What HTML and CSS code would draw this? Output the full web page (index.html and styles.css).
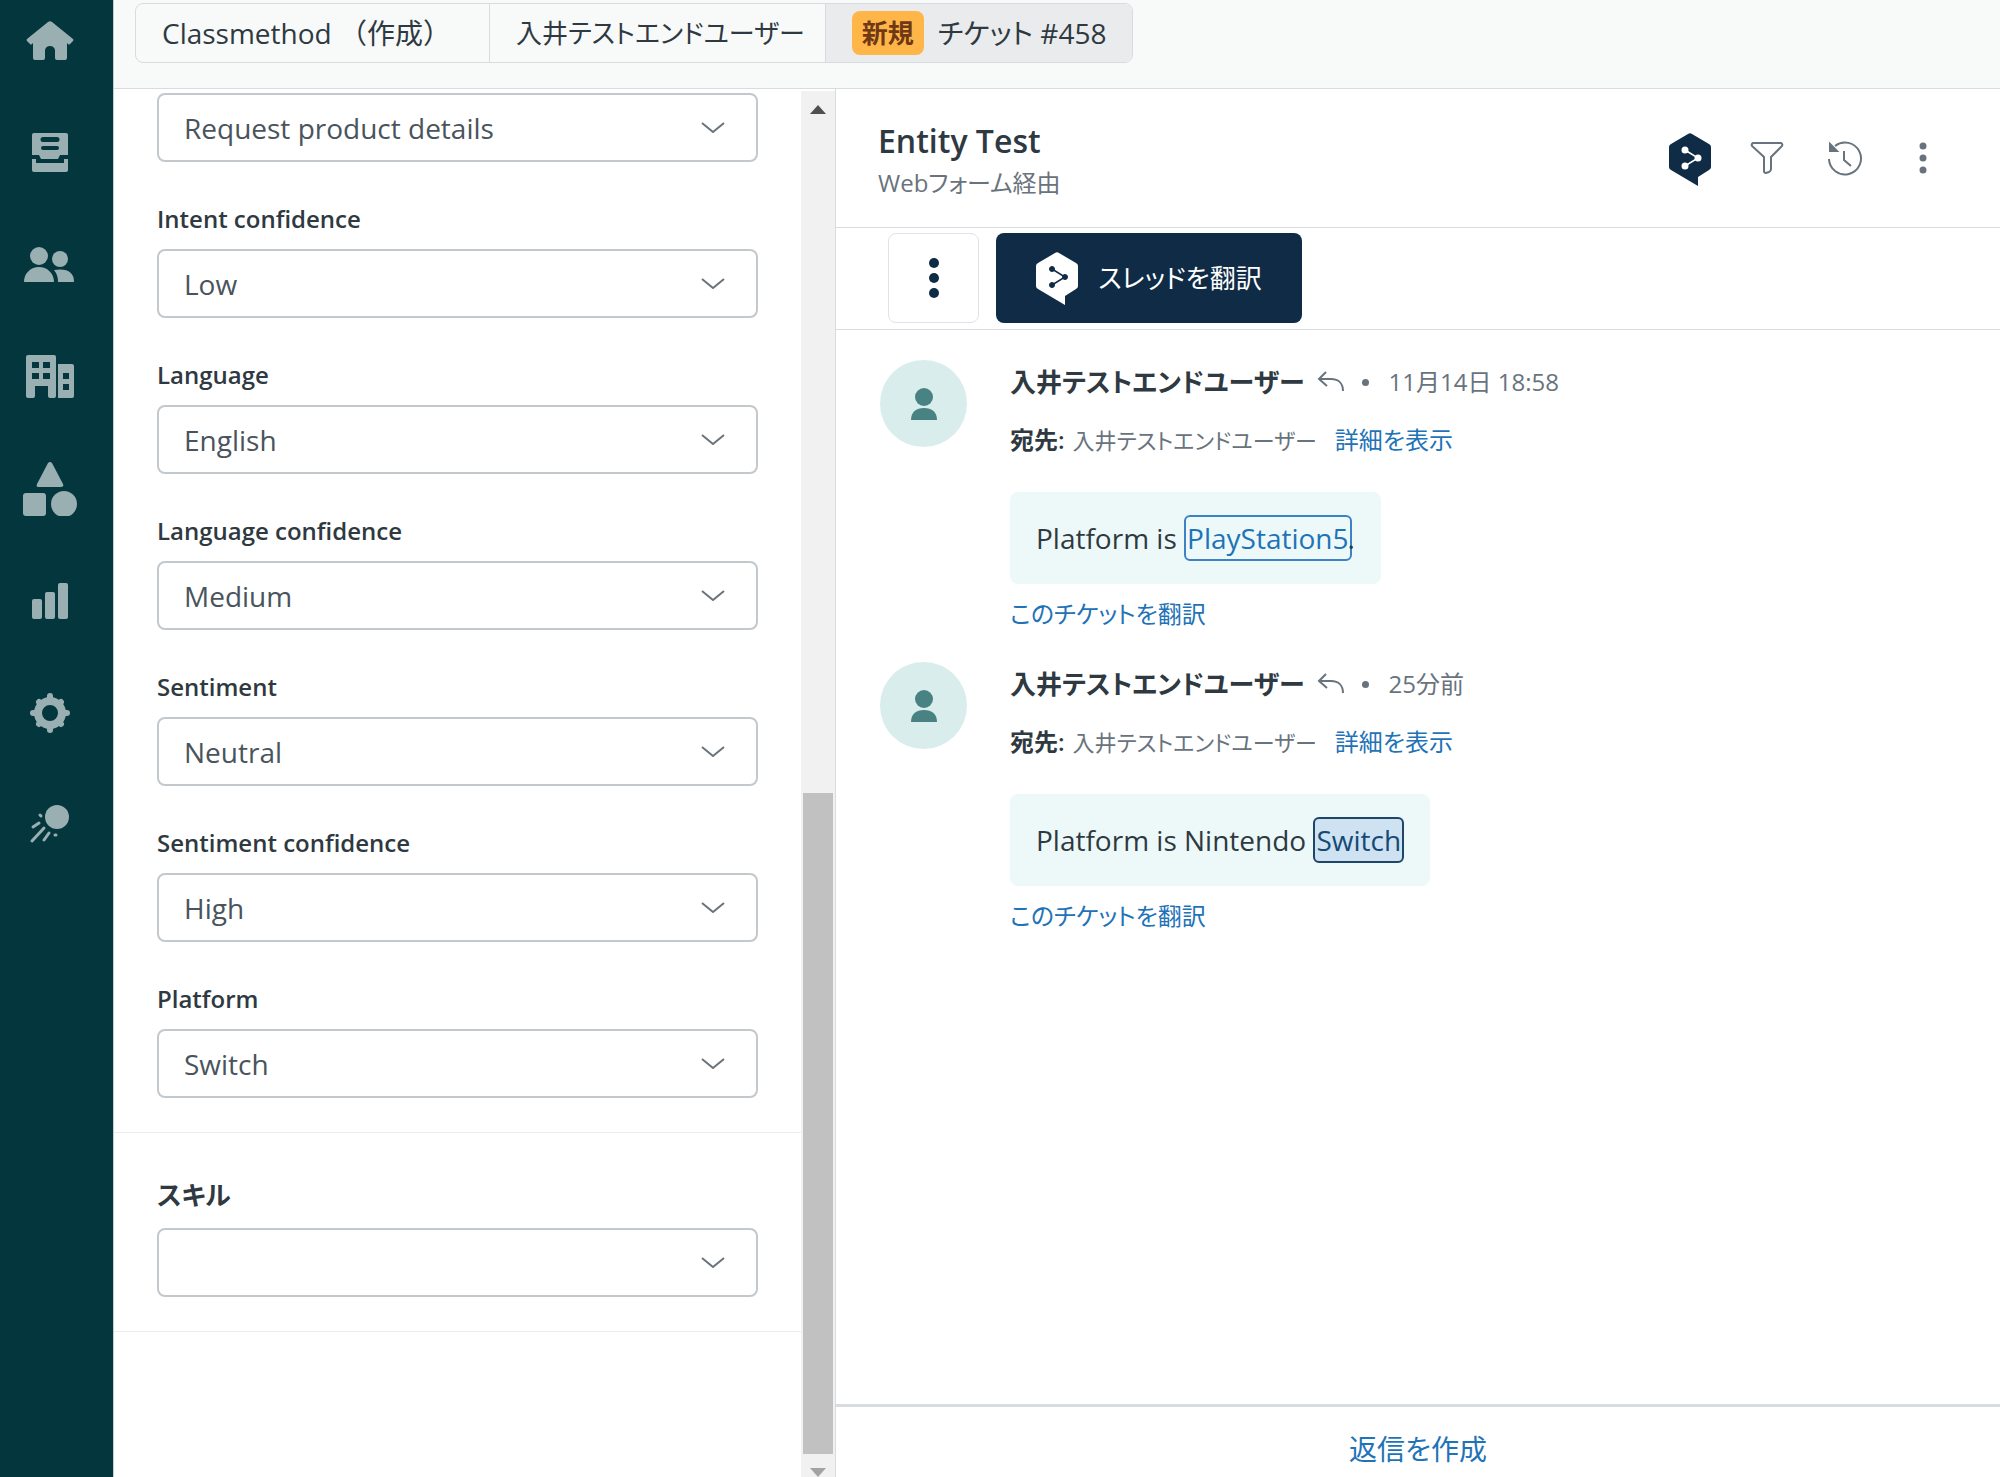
FILE: index.html
```html
<!DOCTYPE html>
<html lang="ja">
<head>
<meta charset="utf-8">
<meta name="viewport" content="width=device-width, initial-scale=1">
<title>Entity Test - チケット #458</title>
<link rel="stylesheet" href="styles.css">
</head>
<body>
<svg class="sprite" aria-hidden="true">
  <symbol id="chevron" viewBox="0 0 26 14"><path d="M2 2l11 9 11-9" fill="none" stroke="currentColor" stroke-width="2" stroke-linejoin="round"/></symbol>
  <symbol id="reply" viewBox="0 0 28 22"><path d="M9 1L2 8l8 7M2 8h12c8 0 12 5 12 12" fill="none" stroke="currentColor" stroke-width="2"/></symbol>
  <symbol id="person" viewBox="0 0 26 32"><circle cx="13" cy="9" r="9"/><path d="M0 32c0-8 5-12 13-12s13 4 13 12z"/></symbol>
  <symbol id="deepl" viewBox="0 0 42 53"><path d="M19 1q2-1.500 4 0l17 10q2 1 2 3v20q0 2-2 3L29 44v9L2 37q-2-1-2-3V14q0-2 2-3z" fill="currentColor"/><g class="node"><path d="M16 17l13 8-13 8" fill="none" stroke-width="1.500"/><circle cx="16" cy="17" r="2.500"/><circle cx="29" cy="25" r="2.500"/><circle cx="16" cy="33" r="2.500"/></g></symbol>
</svg>
<div class="app">
  <nav class="rail" aria-label="メイン">
    <a href="#home" aria-label="ホーム"><svg viewBox="0 0 54 54"><path d="M25 8q2-1.500 4 0l21 17q1 1 0 2l-3 3q-1 1-2 0l-1-1v15q0 2-2 2h-8q-2 0-2-2V36q-1-4-5-4t-5 4v8q0 2-2 2h-8q-2 0-2-2V29l-1 1q-1 1-2 0l-3-3q-1-1 0-2z"/></svg></a>
    <a href="#views" aria-label="ビュー"><svg viewBox="0 0 54 54"><path fill-rule="evenodd" d="M11 7h32q2 0 2 2v20h-8l-2 4H18l-2-4H9V9q0-2 2-2zM20 11a2 2 0 0 0 0 5h14a2 2 0 0 0 0-5zM20 20a2 2 0 0 0 0 4h14a2 2 0 0 0 0-4z"/><path d="M9 33h4v4h28v-4h4v11q0 2-2 2H11q-2 0-2-2z"/></svg></a>
    <a href="#customers" aria-label="顧客"><svg viewBox="0 0 54 54"><circle cx="16" cy="18" r="9"/><circle cx="37" cy="21" r="8"/><path d="M1 44c0-9 7-15 15-15s15 6 15 15zM31 32q20-3 20 12H35q0-7-4-12z"/></svg></a>
    <a href="#organizations" aria-label="組織"><svg viewBox="0 0 54 54"><path fill-rule="evenodd" d="M5 5h26q2 0 2 2v39q0 2-2 2h-4q-2 0-2-2V36H12v10q0 2-2 2H5q-2 0-2-2V7q0-2 2-2zM9 12v6h7v-6zM20 12v6h7v-6zM9 23v6h7v-6zM20 23v6h7v-6zM36 14h13q2 0 2 2v30q0 2-2 2H35V14zM40 23v6h6v-6zM40 34v6h6v-6z"/></svg></a>
    <a href="#objects" aria-label="オブジェクト"><svg viewBox="0 0 54 54"><path d="M25 1q2-2 4 0l11 21q1 3-2 3H15q-2 0-1-3z"/><rect x="0" y="31" width="23" height="23" rx="3"/><circle cx="41" cy="42" r="13"/></svg></a>
    <a href="#reports" aria-label="レポート"><svg viewBox="0 0 54 54"><rect x="9" y="25" width="10" height="20" rx="2"/><rect x="22" y="18" width="10" height="27" rx="2"/><rect x="35" y="9" width="10" height="36" rx="2"/></svg></a>
    <a href="#admin" aria-label="管理"><svg viewBox="0 0 54 54"><g class="teeth"><path d="M27 10v34M10 27h34M16 16l22 22M38 16L16 38"/></g><circle cx="27" cy="27" r="12" class="ring"/></svg></a>
    <a href="#apps" aria-label="アプリ"><svg viewBox="0 0 54 54"><circle cx="34" cy="19" r="12"/><path d="M10 29l6-4M9 43l12-13M21 42l5-7M17 17l1 1M32 37l1 0" class="trail"/></svg></a>
  </nav>
  <div class="workspace">
    <header class="topbar">
      <nav class="tabs" aria-label="チケット">
        <a href="#org" class="organization">Classmethod （作成）</a>
        <a href="#user" class="requester">入井テストエンドユーザー</a>
        <a href="#ticket" class="current" aria-current="page"><span class="badge">新規</span>チケット #458</a>
      </nav>
    </header>
    <div class="columns">
      <aside class="properties">
        <form class="fields">
          <div class="group">
            <div class="field"><span class="picker"><select aria-label="Intent"><option>Request product details</option></select><svg><use href="#chevron"/></svg></span></div>
            <div class="field"><label for="intent-confidence">Intent confidence</label><span class="picker"><select id="intent-confidence"><option>Low</option></select><svg><use href="#chevron"/></svg></span></div>
            <div class="field"><label for="language">Language</label><span class="picker"><select id="language"><option>English</option></select><svg><use href="#chevron"/></svg></span></div>
            <div class="field"><label for="language-confidence">Language confidence</label><span class="picker"><select id="language-confidence"><option>Medium</option></select><svg><use href="#chevron"/></svg></span></div>
            <div class="field"><label for="sentiment">Sentiment</label><span class="picker"><select id="sentiment"><option>Neutral</option></select><svg><use href="#chevron"/></svg></span></div>
            <div class="field"><label for="sentiment-confidence">Sentiment confidence</label><span class="picker"><select id="sentiment-confidence"><option>High</option></select><svg><use href="#chevron"/></svg></span></div>
            <div class="field"><label for="platform">Platform</label><span class="picker"><select id="platform"><option>Switch</option></select><svg><use href="#chevron"/></svg></span></div>
          </div>
          <div class="group skills">
            <div class="field"><label for="skill">スキル</label><span class="picker"><select id="skill"><option></option></select><svg><use href="#chevron"/></svg></span></div>
          </div>
        </form>
        <div class="scrollbar" aria-hidden="true">
          <svg viewBox="0 0 16 9"><path d="M0 9l8-9 8 9z"/></svg>
          <span class="thumb"></span>
          <svg class="down" viewBox="0 0 16 9"><path d="M0 0h16L8 9z"/></svg>
        </div>
      </aside>
      <main class="ticket">
        <header class="heading">
          <div>
            <h1>Entity Test</h1>
            <p>Webフォーム経由</p>
          </div>
          <div class="actions">
            <button type="button" class="brand" aria-label="DeepL"><svg viewBox="0 0 42 53"><use href="#deepl"/></svg></button>
            <button type="button" aria-label="フィルター"><svg viewBox="0 0 36 36"><path d="M4 3h28q2 1 1 3L22 17v12q0 2-2 3l-3 1q-2 0-2-2V17L3 6q-1-2 1-3z"/></svg></button>
            <button type="button" aria-label="履歴"><svg viewBox="0 0 36 36"><path d="M2 19A16 16 0 1 0 8 6M17 11v9l7 6"/><path class="solid" d="M3 4v7h7z"/></svg></button>
            <button type="button" aria-label="その他"><svg viewBox="0 0 36 36"><g class="dots"><circle cx="18" cy="6" r="2.500"/><circle cx="18" cy="18" r="2.500"/><circle cx="18" cy="30" r="2.500"/></g></svg></button>
          </div>
        </header>
        <div class="toolbar">
          <button type="button" class="more" aria-label="オプション"><svg viewBox="0 0 10 42"><circle cx="5" cy="6" r="5"/><circle cx="5" cy="21" r="5"/><circle cx="5" cy="36" r="5"/></svg></button>
          <button type="button" class="translate"><svg viewBox="0 0 42 53"><use href="#deepl"/></svg>スレッドを翻訳</button>
        </div>
        <div class="thread">
          <article class="message">
            <span class="avatar"><svg><use href="#person"/></svg></span>
            <div class="content">
              <div class="byline"><strong>入井テストエンドユーザー</strong><svg><use href="#reply"/></svg><span class="dot"></span><time>11月14日 18:58</time></div>
              <div class="recipient"><b>宛先:</b><span>入井テストエンドユーザー</span><a href="#details-1">詳細を表示</a></div>
              <p class="bubble">Platform is <mark>PlayStation5</mark>.</p>
              <a class="translate-link" href="#translate-1">このチケットを翻訳</a>
            </div>
          </article>
          <article class="message">
            <span class="avatar"><svg><use href="#person"/></svg></span>
            <div class="content">
              <div class="byline"><strong>入井テストエンドユーザー</strong><svg><use href="#reply"/></svg><span class="dot"></span><time>25分前</time></div>
              <div class="recipient"><b>宛先:</b><span>入井テストエンドユーザー</span><a href="#details-2">詳細を表示</a></div>
              <p class="bubble">Platform is Nintendo <mark class="selected">Switch</mark></p>
              <a class="translate-link" href="#translate-2">このチケットを翻訳</a>
            </div>
          </article>
        </div>
        <footer class="composer"><a href="#reply-form">返信を作成</a></footer>
      </main>
    </div>
  </div>
</div>
</body>
</html>
```
FILE: styles.css
```css
* { box-sizing: border-box; }

body {
  margin: 0;
  background: #fff;
  color: #2f3941;
  font-family: "Open Sans", "Noto Sans CJK JP", sans-serif;
  font-size: 28px;
  line-height: 40px;
  font-feature-settings: "palt";
}

h1, p { margin: 0; }
a { color: #1f73b7; text-decoration: none; }
button { padding: 0; border: 0; background: none; font: inherit; }
svg { display: block; flex: none; fill: currentColor; }
.sprite { position: absolute; width: 0; height: 0; }

.app { display: flex; min-height: 100vh; }

/* Navigation rail */
.rail {
  flex: none;
  width: 114px;
  padding: 14px 0 0 23px;
  background: #03363d;
  border-right: 1px solid #c2cdd0;
}
.rail a { display: block; width: 54px; margin-bottom: 58px; color: #9aafb1; }
.rail svg { width: 54px; height: 54px; }
.teeth { stroke: currentColor; stroke-width: 6; stroke-linecap: round; }
.ring { fill: #03363d; stroke: currentColor; stroke-width: 8; }
.trail { fill: none; stroke: currentColor; stroke-width: 3; stroke-linecap: round; }

.workspace { flex: 1; display: flex; flex-direction: column; min-width: 0; }

/* Tabs */
.topbar {
  display: flex;
  align-items: flex-start;
  height: 89px;
  padding: 3px 21px 0;
  background: #f8f9f9;
  border-bottom: 1px solid #d8dcde;
}
.tabs { display: flex; border: 1px solid #d8dcde; border-radius: 8px; overflow: hidden; }
.tabs a {
  display: flex;
  align-items: center;
  gap: 14px;
  height: 58px;
  padding: 0 26px;
  color: #2f3941;
  white-space: nowrap;
}
.tabs a + a { border-left: 1px solid #d8dcde; }
.tabs .organization { padding-right: 38px; font-feature-settings: normal; }
.tabs .requester { padding-right: 20px; font-size: 26px; }
.tabs .current { background: #e9ebed; }
.badge {
  padding: 2px 10px;
  border-radius: 8px;
  background: #ffb648;
  color: #703815;
  font-size: 26px;
  font-weight: 600;
}

.columns { flex: 1; display: flex; }

/* Ticket properties */
.properties { flex: none; display: flex; width: 722px; border-right: 1px solid #d8dcde; }
.fields { flex: 1; }
.group {
  display: flex;
  flex-direction: column;
  gap: 39px;
  padding: 4px 43px 34px;
  border-bottom: 1px solid #e9ebed;
}
.field { display: flex; flex-direction: column; gap: 12px; }
.field label { font-size: 24px; font-weight: 600; line-height: 36px; }
.skills { padding-top: 41px; }
.skills label { font-size: 26px; line-height: 42px; }
.picker { display: grid; align-items: center; }
.picker select, .picker svg { grid-area: 1 / 1; }
.picker select {
  appearance: none;
  width: 100%;
  height: 69px;
  padding: 0 60px 0 25px;
  border: 2px solid #c2c8cc;
  border-radius: 8px;
  background: #fff;
  color: #49545c;
  font: inherit;
}
.picker svg { justify-self: end; width: 26px; height: 14px; margin-right: 32px; color: #68737d; pointer-events: none; }

.scrollbar {
  display: flex;
  flex-direction: column;
  align-items: center;
  width: 34px;
  margin-top: 2px;
  padding: 14px 0 0;
  background: #f1f1f1;
  color: #505050;
}
.scrollbar svg { width: 16px; height: 9px; }
.scrollbar .down { height: 9px; margin: 14px 0 0; color: #a3a3a3; }
.thumb { width: 30px; height: 661px; margin-top: auto; background: #c1c1c1; }

/* Conversation */
.ticket { flex: 1; display: flex; flex-direction: column; min-width: 0; }
.heading {
  display: flex;
  justify-content: space-between;
  padding: 32px 59px 22px 42px;
  border-bottom: 1px solid #d8dcde;
}
.heading h1 { font-size: 32px; font-weight: 600; line-height: 40px; }
.heading p { color: #68737d; font-size: 24px; line-height: 44px; }
.actions { display: flex; align-items: flex-start; gap: 42px; color: #68737d; padding-top: 12px; }
.actions button { color: inherit; }
.actions button svg { width: 36px; height: 36px; margin-top: 7px; fill: none; stroke: currentColor; stroke-width: 2; }
.actions .brand { margin-right: -4px; color: #0f2b46; }
.actions .brand svg { width: 42px; height: 53px; margin-top: 0; stroke: none; }
.dots, .actions .solid { fill: currentColor; }
.node { fill: var(--node); stroke: var(--node); }
.brand { --node: #fff; }
.translate { --node: #0f2b46; }

.toolbar { display: flex; gap: 17px; padding: 5px 52px 6px; border-bottom: 1px solid #d8dcde; }
.toolbar button { display: flex; align-items: center; justify-content: center; height: 90px; border-radius: 8px; }
.toolbar .more { width: 91px; border: 1px solid #dee4ea; color: #0f2b46; }
.more svg { width: 10px; height: 42px; }
.toolbar .translate { gap: 20px; width: 306px; background: #0f2b46; color: #fff; font-size: 26px; }
.translate svg { width: 42px; height: 53px; color: #fff; }

.thread { flex: 1; display: flex; flex-direction: column; gap: 28px; padding: 30px 44px; }
.message { display: flex; gap: 43px; }
.avatar {
  flex: none;
  display: flex;
  align-items: center;
  justify-content: center;
  width: 87px;
  height: 87px;
  border-radius: 50%;
  background: #daeded;
  color: #498283;
}
.avatar svg { width: 26px; height: 34px; }
.content { display: flex; flex-direction: column; align-items: flex-start; }
.byline, .recipient { display: flex; align-items: center; }
.byline { color: #68737d; font-size: 24px; line-height: 44px; }
.byline strong { color: #2f3941; font-size: 26px; font-weight: 600; }
.byline svg { width: 28px; height: 22px; margin: 0 17px 0 12px; }
.dot { width: 7px; height: 7px; margin-right: 20px; border-radius: 50%; background: currentColor; }
.recipient { margin: 16px 0 32px; color: #68737d; font-size: 24px; }
.recipient b { margin-right: 8px; color: #2f3941; font-weight: 600; }
.recipient span { font-size: 22px; }
.recipient a { margin-left: 18px; }
.bubble { padding: 26px; border-radius: 8px; background: #edf9f9; }
.bubble mark { margin-right: -4px; padding: 2px 1px; border: 2px solid #3d82c4; border-radius: 6px; background: none; color: #1f73b7; }
.bubble mark.selected { margin: 0; border-color: #1f4668; background: #cee2f2; color: #144a75; }
.translate-link { margin-top: 10px; font-size: 24px; line-height: 40px; }

.composer { padding: 22px 0 8px; border-top: 3px solid #d8dcde; text-align: center; }
```
